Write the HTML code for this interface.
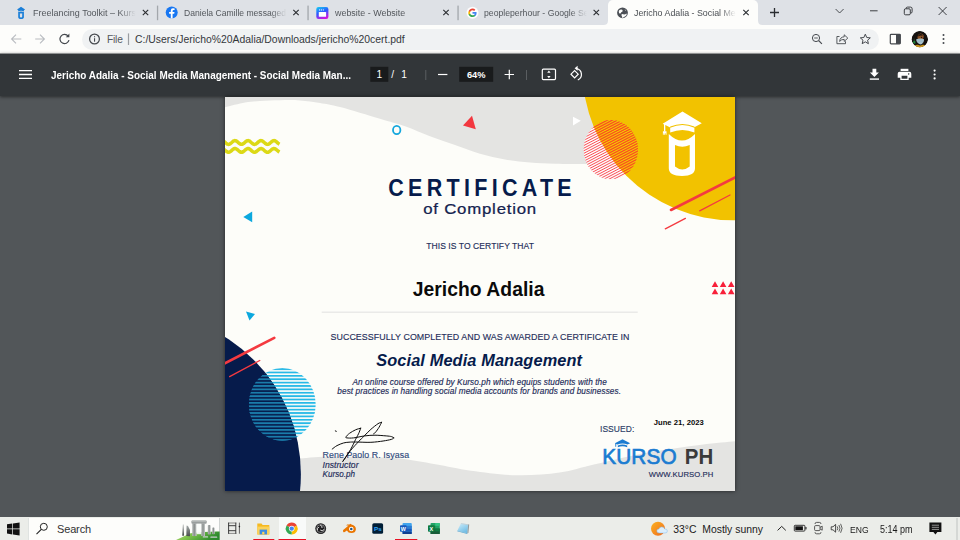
<!DOCTYPE html>
<html><head><meta charset="utf-8">
<style>
*{box-sizing:border-box;margin:0;padding:0}
html,body{width:960px;height:540px;overflow:hidden;background:#525659;font-family:"Liberation Sans",sans-serif;}
#tabs{position:absolute;left:0;top:0;width:960px;height:25px;background:#dee1e6;}
.tab{position:absolute;top:0;height:25px;font-size:9.5px;color:#45494d;line-height:25px;white-space:nowrap;overflow:hidden}
.tabx{position:absolute;top:0;line-height:25px;font-size:11px;color:#202124}
.sep{position:absolute;top:7px;width:1px;height:12px;background:#9a9ea3}
#active{position:absolute;left:608px;top:-0.5px;width:150px;height:25.5px;background:#fdfdfb;border-radius:5px 5px 0 0}
#addr{position:absolute;left:0;top:25px;width:960px;height:28px;background:#fdfdfb;}
#omni{position:absolute;left:82px;top:3.5px;width:797px;height:21px;border-radius:11px;background:#f0f2f3}
#pdfbar{position:absolute;left:0;top:53px;width:960px;height:42.5px;background:#323639;box-shadow:0 1px 3px rgba(0,0,0,.5)}
#view{position:absolute;left:0;top:97px;width:960px;height:420px;background:#525659}
#cert{position:absolute;left:225px;top:97px;width:510px;height:394px;background:#fdfdf9;box-shadow:0 0 4px rgba(0,0,0,.6)}
#task{position:absolute;left:0;top:517px;width:960px;height:23px;background:#ebede9}

.tt{position:absolute;top:-0.5px;height:25px;line-height:25px;font-size:9.6px;transform:scaleX(0.948);transform-origin:0 0;color:#53575c;white-space:nowrap;overflow:hidden;-webkit-mask-image:linear-gradient(90deg,#000 calc(100% - 20px),transparent calc(100% - 2px));mask-image:linear-gradient(90deg,#000 calc(100% - 20px),transparent calc(100% - 2px))}
.ab{position:absolute}
svg.ab{overflow:visible}
.tbt{position:absolute;color:#fff;font-size:10px;line-height:12px;white-space:nowrap}
.tk{position:absolute;top:0.6px;height:23px;line-height:23px;font-size:10.4px;color:#1a1a1a;white-space:nowrap}
</style></head><body>
<div id="tabs"><div id="active"></div><svg class="ab" style="left:0;top:0" width="960" height="25"><path d="M603.5,25 Q608,25 608,20.5 L608,25 Z M762.5,25 Q758,25 758,20.5 L758,25 Z" fill="#fdfdfb"/></svg><svg class="ab" style="left:0;top:0" width="960" height="25"><g fill="#1b7fd8"><path d="M21,6.7 L25.1,9.4 L23.9,10.2 L23.9,11.4 Q21,10.1 18.2,11.4 L18.2,10.3 L17.1,9.6 Z"/><path d="M18.2,12 Q21,10.8 23.9,12 L23.9,17 Q23.9,19.1 21,19.1 Q18.2,19.1 18.2,17 Z M19.9,13.3 L19.9,16.6 Q19.9,17.5 21.05,17.5 Q22.2,17.5 22.2,16.6 L22.2,13.3 Q21.05,13.8 19.9,13.3 Z" fill-rule="evenodd"/></g><rect x="156.9" y="5.6" width="1.3" height="14.6" fill="#a3a7ac"/><rect x="307.4" y="5.6" width="1.3" height="14.6" fill="#a3a7ac"/><rect x="457.4" y="5.6" width="1.3" height="14.6" fill="#a3a7ac"/><circle cx="171.7" cy="12.5" r="6" fill="#1877f2"/><path d="M172.6,18.4 v-4.6 h1.6 l0.3,-1.8 h-1.9 v-1.1 q0,-0.9 1,-0.9 h1 v-1.6 q-0.8,-0.15 -1.6,-0.15 q-2.2,0 -2.2,2.3 v1.45 h-1.7 v1.8 h1.7 v4.6 z" fill="#fff"/><defs><linearGradient id="wg" x1="0.2" y1="0" x2="0.6" y2="1"><stop offset="0" stop-color="#18c4f2"/><stop offset="0.45" stop-color="#2a5cff"/><stop offset="1" stop-color="#d312e0"/></linearGradient></defs><rect x="316.3" y="6.9" width="12.1" height="12.1" rx="2.2" fill="url(#wg)"/><rect x="318.8" y="12" width="7.3" height="4.8" rx="0.6" fill="#fff"/><rect x="319" y="9.4" width="1.1" height="1.1" fill="#e6f3ff"/><rect x="320.9" y="9.4" width="1.1" height="1.1" fill="#e6f3ff"/><rect x="322.8" y="9.4" width="1.1" height="1.1" fill="#e6f3ff"/><circle cx="472.5" cy="12.8" r="6" fill="#fdfdfd"/><g transform="translate(467.9,8.2) scale(0.192)"><path fill="#4285F4" d="M45.12 24.5c0-1.56-.14-3.06-.4-4.5H24v8.51h11.84c-.51 2.75-2.06 5.08-4.39 6.64v5.52h7.11c4.16-3.83 6.56-9.47 6.56-16.17z"/><path fill="#34A853" d="M24 46c5.94 0 10.92-1.97 14.56-5.33l-7.11-5.52c-1.97 1.32-4.49 2.1-7.45 2.1-5.73 0-10.58-3.87-12.31-9.07H4.34v5.7C7.96 41.07 15.4 46 24 46z"/><path fill="#FBBC05" d="M11.69 28.18C11.25 26.86 11 25.45 11 24s.25-2.86.69-4.18v-5.7H4.34C2.85 17.09 2 20.45 2 24c0 3.55.85 6.91 2.34 9.88l7.35-5.7z"/><path fill="#EA4335" d="M24 10.75c3.23 0 6.13 1.11 8.41 3.29l6.31-6.31C34.91 4.18 29.93 2 24 2 15.4 2 7.96 6.93 4.34 14.12l7.35 5.7c1.73-5.2 6.58-9.07 12.31-9.07z"/></g><circle cx="622.5" cy="12.8" r="5.4" fill="#4b4f55"/><path d="M619,10.6 q1.4,-1.4 3.2,-0.8 q1,0.8 0.1,1.9 q-1.3,0.3 -1.6,1.5 q-0.9,0.7 -1.6,-0.2 q-0.6,-1.2 -0.1,-2.4z M621.4,14.4 q1.4,-0.8 2.6,0.1 q1.4,0.1 2.3,-1 q0.7,0.5 0.2,1.6 q-0.9,1.6 -2.6,2 q-0.7,0.9 -1.8,0.7 q-0.6,-0.8 0,-1.6 q-0.9,-0.7 -0.7,-1.8z M624.6,9.2 q1.2,0.6 1.6,1.8 q-1,0 -1.6,-1.8z" fill="#fdfdfb"/><path d="M770,12.5 h9 M774.5,8 v9" stroke="#2a2d31" stroke-width="1.3" fill="none"/><path d="M835.6,9 l4,4 l4,-4" stroke="#3a3d41" stroke-width="0.9" fill="none"/><path d="M870,10.8 h7.6" stroke="#2a2d31" stroke-width="0.9" fill="none"/><rect x="904.3" y="8.8" width="6" height="6" rx="1.2" stroke="#2a2d31" stroke-width="0.9" fill="none"/><path d="M906,8.6 q0,-1.5 1.5,-1.5 h3 q1.6,0 1.6,1.6 v3 q0,1.5 -1.5,1.5" stroke="#2a2d31" stroke-width="0.9" fill="none"/><path d="M938.6,7 l8,8 M946.6,7 l-8,8" stroke="#2a2d31" stroke-width="0.9" fill="none"/></svg><div class="tt" style="left:33px;width:111.9px;transform:scaleX(0.934)">Freelancing Toolkit – Kurso.ph</div><div class="tt" style="left:184px;width:116.9px;transform:scaleX(0.894)">Daniela Camille messaged you</div><div class="tt" style="left:334.5px;width:112.4px;transform:scaleX(0.93);-webkit-mask-image:none;mask-image:none">website - Website</div><div class="tt" style="left:484px;width:115.6px;transform:scaleX(0.904)">peopleperhour - Google Search</div><div class="tt" style="left:634px;width:113.3px;transform:scaleX(0.922);color:#4a4e53">Jericho Adalia - Social Media</div><svg class="ab" style="left:0;top:0" width="960" height="26"><path d="M142.8,9.8 L148.2,15.2 M148.2,9.8 L142.8,15.2" stroke="#2a2d31" stroke-width="1.1" fill="none"/></svg><svg class="ab" style="left:0;top:0" width="960" height="26"><path d="M293.3,9.8 L298.7,15.2 M298.7,9.8 L293.3,15.2" stroke="#2a2d31" stroke-width="1.1" fill="none"/></svg><svg class="ab" style="left:0;top:0" width="960" height="26"><path d="M443.3,9.8 L448.7,15.2 M448.7,9.8 L443.3,15.2" stroke="#2a2d31" stroke-width="1.1" fill="none"/></svg><svg class="ab" style="left:0;top:0" width="960" height="26"><path d="M593.5999999999999,9.8 L599.0,15.2 M599.0,9.8 L593.5999999999999,15.2" stroke="#2a2d31" stroke-width="1.1" fill="none"/></svg><svg class="ab" style="left:0;top:0" width="960" height="26"><path d="M743.3,9.8 L748.7,15.2 M748.7,9.8 L743.3,15.2" stroke="#2a2d31" stroke-width="1.1" fill="none"/></svg></div>
<div id="addr"><div id="omni"></div><svg class="ab" style="left:0;top:0" width="960" height="28"><path d="M21.3,14 h-9.4 M16,9.6 l-4.4,4.4 l4.4,4.4" stroke="#b9bcc0" stroke-width="1.1" fill="none"/><path d="M35.2,14 h9.4 M40,9.6 l4.4,4.4 l-4.4,4.4" stroke="#b9bcc0" stroke-width="1.1" fill="none"/><path d="M68.2,11.2 A4.6,4.6 0 1 0 69,15.2" stroke="#45494e" stroke-width="1.2" fill="none"/><path d="M69.4,8.6 v3.6 h-3.6 z" fill="#45494e"/><circle cx="94.5" cy="14" r="4.9" stroke="#45494e" stroke-width="1.25" fill="none"/><rect x="94" y="13.2" width="1.1" height="3.5" fill="#45494e"/><rect x="94" y="11.2" width="1.1" height="1.1" fill="#45494e"/><rect x="127.9" y="8.4" width="1.2" height="11.6" fill="#9a9da1"/><circle cx="816" cy="13" r="3.6" stroke="#45494e" stroke-width="1" fill="none"/><path d="M818.7,15.7 l3.2,3.2" stroke="#45494e" stroke-width="1.2"/><path d="M814.2,13 h3.6" stroke="#45494e" stroke-width="0.9"/><path d="M839.5,11.5 h-2.6 v7.2 h8.6 v-2.4" stroke="#45494e" stroke-width="0.9" fill="none"/><path d="M839.6,16.4 q0.4,-4.4 4.6,-4.6 v-2 l3.6,3.3 l-3.6,3.3 v-2 q-2.8,-0.2 -4.6,2z" stroke="#45494e" stroke-width="0.9" fill="none" stroke-linejoin="round"/><path d="M865.3,9.2 l1.45,3.3 l3.55,0.35 l-2.7,2.35 l0.8,3.5 l-3.1,-1.85 l-3.1,1.85 l0.8,-3.5 l-2.7,-2.35 l3.55,-0.35z" stroke="#45494e" stroke-width="1" fill="none" stroke-linejoin="round"/><rect x="890.3" y="9.3" width="10" height="9.6" rx="0.8" stroke="#45494e" stroke-width="1.2" fill="none"/><rect x="896" y="9.3" width="4.3" height="9.6" fill="#45494e"/><clipPath id="av"><circle cx="919.8" cy="14.2" r="8.2"/></clipPath><g clip-path="url(#av)"><circle cx="919.8" cy="14.2" r="8.3" fill="#15110f"/><path d="M913.6,19 q-0.6,-3 0.4,-6 q1.5,2.5 1.6,6z" fill="#23402a"/><ellipse cx="920.6" cy="12" rx="3" ry="3.4" fill="#8e5226" transform="rotate(18 920.6 12)"/><path d="M918.2,10.4 q2,-2.4 4.6,-0.6 l-0.4,1 q-2,-1 -4,0.6z" fill="#1a1411"/><circle cx="921.6" cy="12.4" r="0.6" fill="#1a1411"/><path d="M916,14.6 q3.8,-1.8 8,-0.4 q0.2,3.6 -3,5.2 q-3.6,0.2 -5,-4.8z" fill="#a7c1cd"/><path d="M917.4,15 q2.6,-0.8 5.4,0 M917.2,16.6 q2.8,-0.6 5.4,0" stroke="#8fb0bf" stroke-width="0.4" fill="none"/><path d="M914.6,20.4 q2,-1 3.4,-0.6 q2,1.4 4.4,0 q1.6,-0.4 3,0.4 q-2.2,2.4 -5.6,2.4 q-3.2,0 -5.2,-2.2z" fill="#c9951e"/><circle cx="914.3" cy="17.2" r="1.1" fill="#1f8a3a"/></g><circle cx="943.5" cy="10" r="1" fill="#45494e"/><circle cx="943.5" cy="14" r="1" fill="#45494e"/><circle cx="943.5" cy="18" r="1" fill="#45494e"/></svg><div class="ab" style="left:107px;top:1.3px;line-height:28px;font-size:10.2px;color:#54585d;letter-spacing:-0.2px">File</div><div class="ab" id="url" style="left:135px;top:1.3px;line-height:28px;font-size:10.4px;color:#34373b;white-space:nowrap">C:/Users/Jericho%20Adalia/Downloads/jericho%20cert.pdf</div></div>
<div id="view"></div>
<div id="pdfbar"><svg class="ab" style="left:0;top:0" width="960" height="43"><path d="M19,17.6 h13 M19,21.5 h13 M19,25.4 h13" stroke="#fff" stroke-width="1.3"/><rect x="370.3" y="13.8" width="18" height="15" fill="#191b1c"/><rect x="459.2" y="13.8" width="34" height="15" fill="#191b1c"/><rect x="425.3" y="17" width="1" height="10" fill="#5a5e61"/><rect x="526" y="17" width="1" height="10" fill="#5a5e61"/><path d="M438,21.5 h9.4" stroke="#fff" stroke-width="1.2"/><path d="M504.6,21.5 h9.4 M509.3,16.8 v9.4" stroke="#fff" stroke-width="1.2"/><rect x="542.3" y="16.2" width="13.2" height="10.4" rx="1" stroke="#fff" stroke-width="1.2" fill="none"/><path d="M548.9,17.6 l1.7,2.1 h-3.4z M548.9,25.2 l1.7,-2.1 h-3.4z" fill="#fff"/><g stroke="#fff" stroke-width="1.2" fill="none"><path d="M574.6,17.6 l3.6,3.6 l-3.6,3.6 l-3.6,-3.6z"/><path d="M576.6,15.6 A6,6 0 0 1 577.8,27 "/></g><path d="M577.6,12.8 v5 l-3,-2.5z" fill="#fff"/><path d="M872.5,15.8 h3.8 v3.6 h2.6 l-4.5,4.5 l-4.5,-4.5 h2.6z" fill="#fff"/><rect x="869.8" y="25.4" width="9.2" height="1.4" fill="#fff"/><path d="M900.6,15.8 h7.8 v2.2 h-7.8z" fill="#fff"/><path d="M899.6,18.8 h9.8 q1.9,0 1.9,1.9 v4 h-2.6 v2.4 h-8.4 v-2.4 h-2.6 v-4 q0,-1.9 1.9,-1.9z M901.6,22.8 v3 h5.8 v-3z M908.7,20.3 a0.7,0.7 0 1 0 0.01,0z" fill="#fff" fill-rule="evenodd"/><circle cx="934.6" cy="17.6" r="1.1" fill="#fff"/><circle cx="934.6" cy="21.5" r="1.1" fill="#fff"/><circle cx="934.6" cy="25.4" r="1.1" fill="#fff"/></svg><div class="tbt" id="ptitle" style="left:51px;top:15.5px;font-weight:700;font-size:10.8px;transform:scaleX(0.92);transform-origin:0 0">Jericho Adalia - Social Media Management - Social Media Man...</div><div class="tbt" style="left:370.3px;width:18px;text-align:center;top:15.5px;font-size:10.2px">1</div><div class="tbt" style="left:391.3px;top:15.5px;font-size:10.2px">/</div><div class="tbt" style="left:401.3px;top:15.5px;font-size:10.2px">1</div><div class="tbt" style="left:459.2px;width:34px;text-align:center;top:15.5px;font-size:9.3px;font-weight:700">64%</div></div>
<div id="cert"><svg id="certsvg" width="510" height="394" viewBox="225 97 510 394" style="position:absolute;left:0;top:0;font-family:'Liberation Sans',sans-serif">
<defs>
<clipPath id="cp"><rect x="225" y="97" width="510" height="394"/></clipPath>
<pattern id="hatch" width="2.15" height="2.15" patternUnits="userSpaceOnUse" patternTransform="rotate(-30)"><rect x="0" y="0" width="2.15" height="1.05" fill="#f5434b"/></pattern>
<pattern id="stripes" x="0" y="368.2" width="10" height="3.38" patternUnits="userSpaceOnUse"><rect x="0" y="0" width="10" height="1.8" fill="#27b9e6"/></pattern>
<clipPath id="navyclip"><circle cx="139.2" cy="474" r="161.7"/></clipPath>
</defs>
<g clip-path="url(#cp)">
<rect x="225" y="97" width="510" height="394" fill="#fdfdf9"/>
<!-- top gray wave -->
<path d="M224,107.4 C227.5,106.6 239.0,103.6 245,102.5 C251.0,101.4 254.2,101.4 260,101 C265.8,100.6 273.3,100.3 280,100.2 C286.7,100.1 293.3,99.9 300,100.4 C306.7,100.9 313.3,101.9 320,103 C326.7,104.1 330.0,104.4 340,107 C350.0,109.6 369.2,115.5 380,118.75 C390.8,122.0 396.7,123.4 405,126.3 C413.3,129.2 421.7,133.2 430,136.3 C438.3,139.4 446.7,142.1 455,145 C463.3,147.9 471.7,151.4 480,153.8 C488.3,156.2 496.7,158.1 505,159.5 C513.3,160.9 521.7,161.8 530,162.5 C538.3,163.2 545.8,163.6 555,163.8 C564.2,164.1 570.8,164.0 585,164 C599.2,164.0 630.8,164.0 640,164 L640,97 L224,97 Z" fill="#e4e4e2"/>
<!-- bottom gray wave -->
<path d="M285,460.5 C287.5,460.2 292.5,459.1 300,458.5 C307.5,457.9 320.7,456.9 330,456.6 C339.3,456.3 347.7,456.7 356,456.8 C364.3,456.9 372.7,457.2 380,457.5 C387.3,457.8 390.8,457.5 400,458.6 C409.2,459.7 423.7,462.3 435.5,464.3 C447.3,466.3 457.4,468.9 471,470.7 C484.6,472.5 502.2,475.0 517,475.3 C531.8,475.6 546.6,474.3 559.6,472.5 C572.6,470.7 580.3,467.6 595,464.3 C609.7,461.0 630.3,455.9 648,452.6 C665.7,449.4 686.7,446.7 701.4,444.8 C716.1,442.9 730.2,441.8 736,441.2 L736,492 L285,492 Z" fill="#e4e4e2"/>
<ellipse cx="610.8" cy="149.6" rx="27.2" ry="29.6" fill="#fdfdf9"/>
<!-- yellow circle -->
<circle cx="733.3" cy="69.4" r="150.9" fill="#f2c200"/>
<!-- hatch circle -->
<clipPath id="hc"><ellipse cx="610.8" cy="149.6" rx="27.2" ry="29.6"/></clipPath><clipPath id="yc"><circle cx="733.3" cy="69.4" r="150.9"/></clipPath>
<g clip-path="url(#hc)"><path d="M576.8,115.42 L644.8,79.78 M576.8,118.02 L644.8,82.38 M576.8,120.62 L644.8,84.98 M576.8,123.22 L644.8,87.58 M576.8,125.82 L644.8,90.18 M576.8,128.42 L644.8,92.78 M576.8,131.02 L644.8,95.38 M576.8,133.62 L644.8,97.98 M576.8,136.22 L644.8,100.58 M576.8,138.82 L644.8,103.18 M576.8,141.42 L644.8,105.78 M576.8,144.02 L644.8,108.38 M576.8,146.62 L644.8,110.98 M576.8,149.22 L644.8,113.58 M576.8,151.82 L644.8,116.18 M576.8,154.42 L644.8,118.78 M576.8,157.02 L644.8,121.38 M576.8,159.62 L644.8,123.98 M576.8,162.22 L644.8,126.58 M576.8,164.82 L644.8,129.18 M576.8,167.42 L644.8,131.78 M576.8,170.02 L644.8,134.38 M576.8,172.62 L644.8,136.98 M576.8,175.22 L644.8,139.58 M576.8,177.82 L644.8,142.18 M576.8,180.42 L644.8,144.78 M576.8,183.02 L644.8,147.38 M576.8,185.62 L644.8,149.98 M576.8,188.22 L644.8,152.58 M576.8,190.82 L644.8,155.18 M576.8,193.42 L644.8,157.78 M576.8,196.02 L644.8,160.38 M576.8,198.62 L644.8,162.98 M576.8,201.22 L644.8,165.58 M576.8,203.82 L644.8,168.18 M576.8,206.42 L644.8,170.78 M576.8,209.02 L644.8,173.38 M576.8,211.62 L644.8,175.98 M576.8,214.22 L644.8,178.58 M576.8,216.82 L644.8,181.18 M576.8,219.42 L644.8,183.78" stroke="#fa4250" stroke-width="0.95" fill="none"/><g clip-path="url(#yc)"><path d="M576.8,115.42 L644.8,79.78 M576.8,118.02 L644.8,82.38 M576.8,120.62 L644.8,84.98 M576.8,123.22 L644.8,87.58 M576.8,125.82 L644.8,90.18 M576.8,128.42 L644.8,92.78 M576.8,131.02 L644.8,95.38 M576.8,133.62 L644.8,97.98 M576.8,136.22 L644.8,100.58 M576.8,138.82 L644.8,103.18 M576.8,141.42 L644.8,105.78 M576.8,144.02 L644.8,108.38 M576.8,146.62 L644.8,110.98 M576.8,149.22 L644.8,113.58 M576.8,151.82 L644.8,116.18 M576.8,154.42 L644.8,118.78 M576.8,157.02 L644.8,121.38 M576.8,159.62 L644.8,123.98 M576.8,162.22 L644.8,126.58 M576.8,164.82 L644.8,129.18 M576.8,167.42 L644.8,131.78 M576.8,170.02 L644.8,134.38 M576.8,172.62 L644.8,136.98 M576.8,175.22 L644.8,139.58 M576.8,177.82 L644.8,142.18 M576.8,180.42 L644.8,144.78 M576.8,183.02 L644.8,147.38 M576.8,185.62 L644.8,149.98 M576.8,188.22 L644.8,152.58 M576.8,190.82 L644.8,155.18 M576.8,193.42 L644.8,157.78 M576.8,196.02 L644.8,160.38 M576.8,198.62 L644.8,162.98 M576.8,201.22 L644.8,165.58 M576.8,203.82 L644.8,168.18 M576.8,206.42 L644.8,170.78 M576.8,209.02 L644.8,173.38 M576.8,211.62 L644.8,175.98 M576.8,214.22 L644.8,178.58 M576.8,216.82 L644.8,181.18 M576.8,219.42 L644.8,183.78" stroke="#fd5018" stroke-width="1.0" fill="none"/></g></g>
<!-- navy -->
<circle cx="139.2" cy="474" r="161.7" fill="#061b4b"/>
<!-- stripes circle -->
<ellipse cx="282.3" cy="404.4" rx="33.4" ry="36.3" fill="url(#stripes)"/>
<g clip-path="url(#navyclip)"><ellipse cx="282.3" cy="404.4" rx="33.4" ry="36.3" fill="#061b4b"/><ellipse cx="282.3" cy="404.4" rx="33.4" ry="36.3" fill="url(#stripes)" opacity="0.62"/></g>

<!-- wavy yellow lines -->
<path d="M223.5,141.08 L224.3,141.66 L225.1,142.36 L225.9,143.09 L226.7,143.73 L227.5,144.18 L228.3,144.39 L229.1,144.32 L229.9,143.98 L230.7,143.42 L231.5,142.73 L232.3,142.00 L233.1,141.35 L233.9,140.86 L234.7,140.62 L235.5,140.66 L236.3,140.96 L237.1,141.50 L237.9,142.18 L238.7,142.91 L239.5,143.58 L240.3,144.09 L241.1,144.36 L241.9,144.36 L242.7,144.09 L243.5,143.58 L244.3,142.91 L245.1,142.18 L245.9,141.50 L246.7,140.96 L247.5,140.66 L248.3,140.62 L249.1,140.86 L249.9,141.35 L250.7,142.00 L251.5,142.73 L252.3,143.42 L253.1,143.98 L253.9,144.32 L254.7,144.39 L255.5,144.18 L256.3,143.73 L257.1,143.09 L257.9,142.36 L258.7,141.66 L259.5,141.08 L260.3,140.71 L261.1,140.60 L261.9,140.78 L262.7,141.21 L263.5,141.83 L264.3,142.55 L265.1,143.26 L265.9,143.86 L266.7,144.26 L267.5,144.40 L268.3,144.26 L269.1,143.86 L269.9,143.26 L270.7,142.55 L271.5,141.83 L272.3,141.21 L273.1,140.78 L273.9,140.60 L274.7,140.71 L275.5,141.08 L276.3,141.66 L277.1,142.36 L277.9,143.09 L278.7,143.73 L279.5,144.18" fill="none" stroke="#dcd916" stroke-width="3.5" stroke-linejoin="round"/>
<path d="M223.5,148.98 L224.3,149.56 L225.1,150.26 L225.9,150.99 L226.7,151.63 L227.5,152.08 L228.3,152.29 L229.1,152.22 L229.9,151.88 L230.7,151.32 L231.5,150.63 L232.3,149.90 L233.1,149.25 L233.9,148.76 L234.7,148.52 L235.5,148.56 L236.3,148.86 L237.1,149.40 L237.9,150.08 L238.7,150.81 L239.5,151.48 L240.3,151.99 L241.1,152.26 L241.9,152.26 L242.7,151.99 L243.5,151.48 L244.3,150.81 L245.1,150.08 L245.9,149.40 L246.7,148.86 L247.5,148.56 L248.3,148.52 L249.1,148.76 L249.9,149.25 L250.7,149.90 L251.5,150.63 L252.3,151.32 L253.1,151.88 L253.9,152.22 L254.7,152.29 L255.5,152.08 L256.3,151.63 L257.1,150.99 L257.9,150.26 L258.7,149.56 L259.5,148.98 L260.3,148.61 L261.1,148.50 L261.9,148.68 L262.7,149.11 L263.5,149.73 L264.3,150.45 L265.1,151.16 L265.9,151.76 L266.7,152.16 L267.5,152.30 L268.3,152.16 L269.1,151.76 L269.9,151.16 L270.7,150.45 L271.5,149.73 L272.3,149.11 L273.1,148.68 L273.9,148.50 L274.7,148.61 L275.5,148.98 L276.3,149.56 L277.1,150.26 L277.9,150.99 L278.7,151.63 L279.5,152.08" fill="none" stroke="#dcd916" stroke-width="3.5" stroke-linejoin="round"/>
<!-- blue ring -->
<ellipse cx="396.7" cy="130" rx="3.7" ry="4.2" fill="none" stroke="#15a7dd" stroke-width="1.8"/>
<!-- red triangle -->
<path d="M472,115.7 L463,125.5 L475.8,129.3 Z" fill="#f2373f"/>
<!-- white triangle -->
<path d="M573,116.7 L580.8,120.8 L573,125.5 Z" fill="#ffffff"/>
<!-- blue triangles -->
<path d="M243.3,217 L252.2,211.5 L252.2,222.2 Z" fill="#0ca8de"/>
<path d="M246,311.5 L255,314 L249.5,320.5 Z" fill="#0ca8de"/>
<!-- red lines top right -->
<path d="M671,210 L736,177" stroke="#f43a40" stroke-width="2.6" stroke-linecap="round"/>
<path d="M699.7,210.8 L730,195" stroke="#f43a40" stroke-width="1.3" stroke-linecap="round"/>
<path d="M665.3,228.8 L685.4,218.4" stroke="#f43a40" stroke-width="1.3" stroke-linecap="round"/>
<!-- red lines bottom left -->
<path d="M224,363.8 L274.3,337.8" stroke="#f43a40" stroke-width="2.6" stroke-linecap="round"/>
<path d="M229.6,376.6 L259.8,360.5" stroke="#f43a40" stroke-width="1.3" stroke-linecap="round"/>
<!-- small red triangles -->
<g fill="#f8203a">
<path d="M711.7,286.9 l3.3,-5.6 l3.3,5.6z M719.8,286.9 l3.3,-5.6 l3.3,5.6z M727.9,286.9 l3.3,-5.6 l3.3,5.6z"/>
<path d="M711.7,294.2 l3.3,-5.6 l3.3,5.6z M719.8,294.2 l3.3,-5.6 l3.3,5.6z M727.9,294.2 l3.3,-5.6 l3.3,5.6z"/>
</g>
<!-- mortarboard icon -->
<g fill="#ffffff">
<path d="M682.5,111.6 L701.8,123.3 L694.4,127.2 L694.4,126.6 Q682.5,121.2 670.2,126.6 L670.2,127.4 L665.3,125 L665.3,131.4 L664,131.4 L664,124.5 L662.7,123.8 Z"/>
<path d="M670.2,127.7 Q682.5,122.5 694.4,127.7 L694.4,132.6 Q682.5,127.4 670.2,132.6 Z"/>
<path d="M662.9,131.2 h3.6 v3.6 h-0.9 v-1.6 h-0.6 v1.6 h-0.8 v-1.6 h-0.5 v1.6 h-0.8z"/>
<path d="M668.8,134 Q682,147.2 695,134 L695,168.3 Q695,175.9 682,175.9 Q668.8,175.9 668.8,168.3 Z M675,145 Q682.3,148.4 689.7,145 L689.7,166.4 Q682.3,172.4 675,166.4 Z" fill-rule="evenodd"/>
</g>
</g>

<!-- text -->
<g>
<text transform="translate(388.3,196) scale(0.91,1)" font-size="23.6" font-weight="700" textLength="201.54" lengthAdjust="spacing" fill="#061b4b">CERTIFICATE</text>
<text transform="translate(423.2,214.3) scale(1.12,1)" font-size="15" textLength="100.89" lengthAdjust="spacing" fill="#14224f" stroke="#14224f" stroke-width="0.25">of Completion</text>
<text transform="translate(426.2,248.9) scale(0.93,1)" font-size="9.2" textLength="115.81" lengthAdjust="spacing" fill="#1f2e5a" stroke="#1f2e5a" stroke-width="0.15">THIS IS TO CERTIFY THAT</text>
<text transform="translate(412.7,295.8) scale(0.985,1)" font-size="19.6" font-weight="700" textLength="133.81" lengthAdjust="spacing" fill="#0a0a0a">Jericho Adalia</text>
<rect x="321.7" y="311.7" width="316" height="0.9" fill="#dededc"/>
<text transform="translate(330.5,340.4) scale(0.915,1)" font-size="9.7" textLength="326.78" lengthAdjust="spacing" fill="#1f2e5a" stroke="#1f2e5a" stroke-width="0.15">SUCCESSFULLY COMPLETED AND WAS AWARDED A CERTIFICATE IN</text>
<text transform="translate(376.2,366) scale(0.96,1)" font-size="17" font-weight="700" font-style="italic" textLength="214.38" lengthAdjust="spacing" fill="#061b4b">Social Media Management</text>
<text transform="translate(352.5,384.9) scale(0.96,1)" font-size="8.6" font-style="italic" textLength="264.9" lengthAdjust="spacing" fill="#1c2a58" stroke="#1c2a58" stroke-width="0.15">An online course offered by Kurso.ph which equips students with the</text>
<text transform="translate(337.3,394.1) scale(0.96,1)" font-size="8.6" font-style="italic" textLength="295.52" lengthAdjust="spacing" fill="#1c2a58" stroke="#1c2a58" stroke-width="0.15">best practices in handling social media accounts for brands and businesses.</text>
<text transform="translate(322.5,457.8) scale(0.92,1)" font-size="9.6" textLength="94.13" lengthAdjust="spacing" fill="#2f4a7c" stroke="#2f4a7c" stroke-width="0.15">Rene Paolo R. Isyasa</text>
<text transform="translate(322.5,467.7) scale(1.0,1)" font-size="8.6" font-style="italic" textLength="36.0" lengthAdjust="spacing" fill="#1c2a58" stroke="#1c2a58" stroke-width="0.15">Instructor</text>
<text transform="translate(322.5,476.9) scale(0.96,1)" font-size="8.4" font-style="italic" textLength="33.85" lengthAdjust="spacing" fill="#1c2a58" stroke="#1c2a58" stroke-width="0.15">Kurso.ph</text>
<text transform="translate(600,432) scale(0.92,1)" font-size="9.2" textLength="37.28" lengthAdjust="spacing" fill="#2c3c66" stroke="#2c3c66" stroke-width="0.15">ISSUED:</text>
<text transform="translate(653.7,425) scale(0.98,1)" font-size="7.8" font-weight="700" textLength="51.02" lengthAdjust="spacing" fill="#0a0a0a">June 21, 2023</text>
<text transform="translate(648.7,476.7) scale(0.96,1)" font-size="8" textLength="67.29" lengthAdjust="spacing" fill="#1f2e5a" stroke="#1f2e5a" stroke-width="0.15">WWW.KURSO.PH</text>
<text transform="translate(602.2,463.7) scale(0.92,1)" font-size="22.6" textLength="80.98" lengthAdjust="spacing" fill="#1a7bd1" stroke="#1a7bd1" stroke-width="0.7">KURSO</text>
<text transform="translate(684.7,463.7) scale(0.905,1)" font-size="22.6" font-weight="700" textLength="31.6" lengthAdjust="spacing" fill="#3a3a3a">PH</text>
</g>
<!-- logo hat -->
<path d="M622.5,439.2 L630.2,443.2 L627.5,444.6 Q622.5,442.6 617.5,444.6 L616.2,443.9 L616.2,446.8 L615.3,446.8 L615.3,443.5 L614.9,443.2 Z" fill="#1a7bd1"/>
<path d="M617.8,445.6 Q622.5,443.6 627.2,445.6 L627.2,447.3 Q622.5,445.3 617.8,447.3 Z" fill="#1a7bd1"/>
<!-- signature -->
<g fill="none" stroke="#0c0c0c" stroke-width="1.0" stroke-linecap="round" stroke-linejoin="round">
<path d="M332.2,449.1 C333.0,448.5 335.1,446.6 337,445.6 C338.9,444.6 341.4,443.6 343.4,443 C345.4,442.4 347.0,442.4 349,442.2 C351.0,442.0 352.0,442.0 355.6,442 C359.2,442.0 366.3,442.5 370.9,442.3 C375.5,442.1 379.7,441.5 383.1,441 C386.5,440.5 389.5,439.9 391.3,439.4 C393.1,438.9 393.4,438.1 393.8,437.9 M393.8,437.9 C393.4,437.7 392.8,436.9 391.5,436.6 C390.2,436.3 388.9,436.1 386.2,435.9 C383.4,435.7 378.6,435.2 375,435.2 C371.4,435.2 368.4,435.4 364.8,435.9 C361.2,436.3 356.6,437.6 353.6,437.9 C350.6,438.2 348.3,438.1 347,437.9 C345.7,437.7 345.6,437.7 346,436.9 C346.4,436.1 347.9,434.5 349.5,433.3 C351.1,432.1 353.7,430.7 355.6,429.8 C357.5,428.9 359.9,428.5 360.7,428.2 M360.7,428.2 C360.4,428.9 360.0,430.4 359.2,432.3 C358.4,434.2 357.1,436.5 355.6,439.4 C354.2,442.3 352.6,446.0 350.5,449.6 C348.4,453.2 344.2,459.4 342.9,461.3 M342.9,461.3 C344.2,459.5 347.9,453.9 350.5,450.6 C353.1,447.3 356.5,443.9 358.7,441.5 C360.9,439.1 361.8,438.4 363.8,436.4 C365.8,434.4 368.5,431.4 370.9,429.3 C373.3,427.2 376.2,424.9 378,423.7 C379.8,422.5 381.0,422.5 381.6,422.3 M381.6,422.3 C381.2,423.1 380.1,425.5 379.1,427.2 C378.1,428.9 376.4,431.2 375.5,432.3 C374.6,433.4 373.8,433.6 373.5,433.8"/>
<path d="M335.3,430.9 l1,0.4"/>
</g>
</svg>
</div>
<div class="ab" style="left:0;top:53px;width:960px;height:1px;background:#8f9192"></div>
<div id="task"><div class="ab" style="left:27.5px;top:1px;width:192.5px;height:22px;background:#fdfdfb;border-right:1px solid #cfd3d1;border-left:1px solid #dfe3e1"></div><div class="ab" style="left:278.5px;top:0;width:27.5px;height:23px;background:#f8faf9"></div><svg class="ab" style="left:0;top:0" width="960" height="23"><path d="M7,7.3 l5.3,-0.8 v5.1 h-5.3z M13,6.4 l6.6,-1 v6.2 h-6.6z M7,12.3 h5.3 v5.1 l-5.3,-0.8z M13,12.3 h6.6 v6.2 l-6.6,-1z" fill="#111"/><circle cx="43.8" cy="9.8" r="3.5" stroke="#222" stroke-width="1" fill="none"/><path d="M41.3,12.4 l-4.8,4.8" stroke="#222" stroke-width="1.1"/><defs><linearGradient id="gr" x1="0" y1="0" x2="1" y2="0.3"><stop offset="0" stop-color="#b5dc7a"/><stop offset="0.45" stop-color="#7cc04a"/><stop offset="1" stop-color="#2c8a2c"/></linearGradient><linearGradient id="st" x1="0" y1="0" x2="1" y2="0"><stop offset="0" stop-color="#b9bdbc"/><stop offset="0.5" stop-color="#8b908f"/><stop offset="1" stop-color="#c9cdcc"/></linearGradient><linearGradient id="sv" x1="0" y1="0" x2="0" y2="1"><stop offset="0" stop-color="#a3a8a7"/><stop offset="1" stop-color="#4a4e4d"/></linearGradient></defs>
<path d="M176,23 L190.6,16.3 Q205,14.4 219.6,14.6 L219.6,23 Z" fill="url(#gr)"/>
<path d="M182.2,18.8 l0.7,-11.2 h0.6 l0.6,11.2z" fill="url(#sv)"/><path d="M186.3,19 l0.3,-10.4 l1.4,0.4 l2,4 v6.2z" fill="url(#sv)"/>
<rect x="192.2" y="6.4" width="4.4" height="12.6" fill="url(#st)"/><rect x="201.2" y="6.4" width="3.8" height="12.6" fill="url(#st)"/>
<rect x="191.4" y="3.4" width="15.3" height="3.4" rx="1" fill="#9a9f9e"/><rect x="191.8" y="3.5" width="14.5" height="1.3" rx="0.6" fill="#b9bdbc"/>
<rect x="196.6" y="6.8" width="4.6" height="10.4" fill="#fbfdfb" opacity="0.9"/>
<rect x="207.8" y="8" width="2.9" height="9.6" rx="0.8" fill="url(#st)"/><rect x="212.2" y="10.6" width="2.5" height="6.6" rx="0.8" fill="url(#st)"/>
<rect x="202.7" y="19.3" width="5.4" height="1.1" rx="0.5" fill="#c9cdcc"/><rect x="210.3" y="19.4" width="7" height="1.4" rx="0.6" fill="#c9cdcc"/><g stroke="#2a2a2a" stroke-width="0.9" fill="none"><path d="M228.6,5.7 v11 M235.8,5.7 v11 M228.6,8.7 h7.2 M228.6,13.7 h7.2"/><path d="M228,6 h8.4 M228,16.4 h8.4" stroke-width="0.5"/><path d="M239.4,5.6 v11.1" stroke-width="0.7"/></g><circle cx="239.4" cy="9.6" r="0.8" fill="#222"/><path d="M257.3,6.6 h4.2 l1.2,1.4 h6.6 v9.4 h-12z" fill="#f5b921"/><path d="M257.3,9.6 h12 v7.8 h-12z" fill="#fbd25a"/><path d="M259.6,12.6 h7.4 v4.8 h-7.4z" fill="#3f8be0"/><rect x="262.2" y="14.8" width="2.2" height="2.6" fill="#fbd25a"/><rect x="253.3" y="22" width="21" height="1.2" fill="#e81123"/><circle cx="291.7" cy="11.6" r="6" fill="#fff"/><path d="M291.7,11.6 L286.5,8.6 A6,6 0 0 1 296.9,8.6 Z" fill="#ea4335"/><path d="M291.7,11.6 L296.9,8.6 A6,6 0 0 1 291.7,17.6 Z" fill="#fbbc05"/><path d="M291.7,11.6 L291.7,17.6 A6,6 0 0 1 286.5,8.6 Z" fill="#34a853"/><circle cx="291.7" cy="11.6" r="2.8" fill="#fff"/><circle cx="291.7" cy="11.6" r="2.2" fill="#4285f4"/><rect x="278.5" y="22" width="27.5" height="1.2" fill="#e81123"/><circle cx="320.7" cy="11.6" r="5.4" fill="#1d1d1f"/><circle cx="320.7" cy="11.6" r="4" fill="none" stroke="#b9b9b9" stroke-width="0.6"/><path d="M320,8 q2.6,0.6 2,3 M324,12.6 q-1.8,2 -3.8,0.4 M317.4,13.4 q-0.6,-2.6 1.8,-3.4" stroke="#d0d0d0" stroke-width="1" fill="none"/><path d="M343.2,13 l5.4,-4.4 h-2.4 l0.9,-1 h2.4 l0.8,-0.9 l1.2,0.9 q4.4,1 4.4,4.6 q-0.4,3.8 -4.6,3.9 q-3.2,0 -4.4,-2.6 l-2.2,1.6 q-1,0.4 -1.5,-0.4 q-0.4,-1 0,-1.7z" fill="#ea7600"/><circle cx="351.3" cy="12" r="2.3" fill="#fff"/><circle cx="351.3" cy="12" r="1.3" fill="#265787"/><rect x="372.3" y="6.2" width="10.8" height="10.6" rx="1.6" fill="#001e36"/><text x="374" y="14.4" font-size="6.2" font-weight="700" fill="#31a8ff" font-family="Liberation Sans">Ps</text><rect x="402.5" y="6" width="9.3" height="11" rx="1" fill="#41a5ee"/><rect x="402.5" y="8.8" width="9.3" height="2.8" fill="#2b7cd3"/><rect x="402.5" y="11.6" width="9.3" height="2.8" fill="#185abd"/><rect x="402.5" y="14.4" width="9.3" height="2.6" rx="0.6" fill="#103f91"/><rect x="400" y="8.2" width="6.6" height="6.6" rx="0.8" fill="#185abd"/><text x="400.8" y="13.6" font-size="5.4" font-weight="700" fill="#fff" font-family="Liberation Sans">W</text><rect x="395" y="22" width="22.3" height="1.2" fill="#e81123"/><rect x="430.5" y="6" width="9.3" height="11" rx="1" fill="#21a366"/><rect x="435.2" y="6" width="4.6" height="2.8" fill="#33c481"/><rect x="430.5" y="8.8" width="4.7" height="2.8" fill="#107c41"/><rect x="430.5" y="11.6" width="9.3" height="5.4" fill="#185c37"/><rect x="435.2" y="11.6" width="4.6" height="2.8" fill="#107c41"/><rect x="428" y="8.2" width="6.6" height="6.6" rx="0.8" fill="#107c41"/><text x="429.5" y="13.6" font-size="5.4" font-weight="700" fill="#fff" font-family="Liberation Sans">X</text><defs><linearGradient id="np" x1="0" y1="0" x2="0.6" y2="1"><stop offset="0" stop-color="#d2effb"/><stop offset="1" stop-color="#6fbce4"/></linearGradient></defs><path d="M461,6.2 L468.2,7.2 L467.4,16.2 L457.3,13.7 Z" fill="url(#np)"/><path d="M468.2,7.2 L469.2,7.6 L468.4,16 L467.4,16.2 Z" fill="#8f9698"/><path d="M457.3,13.7 L467.4,16.2 L467.3,16.9 L457.2,14.3 Z" fill="#5aa6cf"/><path d="M461,6.2 L468.2,7.2 L468.1,7.9 L460.8,6.9 Z" fill="#c9ced0"/><defs><linearGradient id="sun" x1="0" y1="0" x2="1" y2="1"><stop offset="0" stop-color="#fbb321"/><stop offset="1" stop-color="#ef6a1e"/></linearGradient></defs><circle cx="658" cy="11.7" r="7" fill="url(#sun)"/><path d="M659.4,16 q-2.6,0 -2.6,-2 q0,-1.9 2.1,-2 q0.7,-2.2 3,-2.1 q2,0.1 2.7,2 q2.8,0 2.8,2.1 q0,2 -2.4,2z" fill="#dceefb" stroke="#7fbdf0" stroke-width="0.5"/><path d="M777.6,13.4 l4.1,-4 l4.1,4" stroke="#222" stroke-width="1" fill="none"/><rect x="794.3" y="8.3" width="10.6" height="5.8" rx="0.8" stroke="#222" stroke-width="0.9" fill="none"/><rect x="795.3" y="9.3" width="7.6" height="3.8" fill="#111"/><rect x="805.4" y="10" width="1.1" height="2.4" fill="#222"/><rect x="814.6" y="8.6" width="5.4" height="5" rx="1" stroke="#333" stroke-width="0.8" fill="none"/><path d="M820.2,10.4 l2,-1.2 v4 l-2,-1.2" stroke="#333" stroke-width="0.8" fill="none"/><path d="M815,7 q0,-1.6 1.6,-1.6 h2.8 q1.6,0 1.6,1.6 M815,15.2 q0,1.6 1.6,1.6 h2.8 q1.6,0 1.6,-1.6" stroke="#333" stroke-width="0.8" fill="none"/><path d="M831.2,9.8 h1.8 l2.6,-2.4 v7.8 l-2.6,-2.4 h-1.8z" stroke="#222" stroke-width="0.8" fill="none" stroke-linejoin="round"/><path d="M837.2,9.4 q1.2,1.9 0,3.8 M838.9,8 q2.2,3.3 0,6.6 M840.6,6.8 q3,4.5 0,9" stroke="#222" stroke-width="0.7" fill="none"/><path d="M929.4,5.6 h12 v9.4 h-4 l-2,2.5 l-2,-2.5 h-4z" fill="#111"/><path d="M931.8,8.2 h7.2 M931.8,10.3 h7.2 M931.8,12.4 h7.2" stroke="#ebede9" stroke-width="0.6"/><rect x="956.6" y="1" width="0.8" height="22" fill="#b5b9b7"/></svg><div class="tk" style="left:57px;top:1.4px;font-size:11px;letter-spacing:-0.15px;color:#333">Search</div><div class="tk" id="temp" style="left:673.3px;">33°C</div><div class="tk" id="wx" style="left:702.3px;">Mostly sunny</div><div class="tk" style="left:850.2px;font-size:9.7px;transform:scaleX(0.885);transform-origin:0 0">ENG</div><div class="tk" style="left:879.8px;font-size:10px;transform:scaleX(0.9);transform-origin:0 0">5:14 pm</div></div>
</body></html>
